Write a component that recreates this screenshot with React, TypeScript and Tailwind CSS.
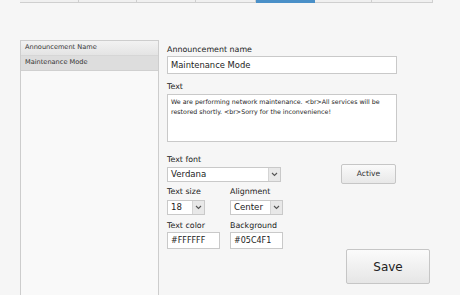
import React from "react";

const font = { fontFamily: '"DejaVu Sans", Verdana, sans-serif' };

function Chevron() {
  return (
    <svg width="7" height="5" viewBox="0 0 7 5">
      <path d="M1 1 L3.5 3.5 L6 1" fill="none" stroke="#555" strokeWidth="1.1" />
    </svg>
  );
}

function Select({ value, w, h = 15 }: { value: string; w: number; h?: number }) {
  return (
    <div
      className="flex items-stretch border border-[#c9c9c9] bg-white"
      style={{ width: w, height: h }}
    >
      <div className="flex-1 flex items-center pl-[3px] text-[8.6px] text-[#222]">{value}</div>
      <div className="w-[12px] flex items-center justify-center bg-[#e8e8e8] border-l border-[#d4d4d4]">
        <Chevron />
      </div>
    </div>
  );
}

export default function App() {
  const tabs = [59, 58, 59, 60, 59, 57, 61];
  return (
    <div className="w-[460px] h-[295px] bg-[#f6f6f6] overflow-hidden flex flex-col" style={font}>
      <div className="ml-[20px] w-[413px] h-[3px] flex shrink-0">
        {tabs.map((w, i) => (
          <div
            key={i}
            style={{ width: w }}
            className={
              i === 4
                ? "h-[3px] bg-[#4a90c8]"
                : "h-[3px] border-b border-r border-[#cfcfcf] bg-[#f0f0f0]"
            }
          />
        ))}
      </div>
      <div className="flex mt-[37px] flex-1">
        <div className="ml-[20px] w-[139px] border border-[#cdcdcd] border-b-0 bg-[#f9f9f9] flex flex-col">
          <div className="h-[15px] flex items-center pl-[4px] text-[6.6px] text-[#333] bg-gradient-to-b from-[#f2f2f2] to-[#e4e4e4] border-b border-[#d6d6d6]">
            Announcement Name
          </div>
          <div className="h-[15px] flex items-center pl-[4px] text-[6.6px] text-[#333] bg-[#dddddd] border-b border-[#d0d0d0]">
            Maintenance Mode
          </div>
        </div>
        <div className="ml-[8px] flex flex-col mt-[5px]">
          <div className="text-[7.9px] text-[#222] leading-[10px]">Announcement name</div>
          <div className="mt-[1px] w-[230px] h-[18px] border border-[#c9c9c9] bg-white flex items-center pl-[3px] text-[8.4px] text-[#222]">
            Maintenance Mode
          </div>
          <div className="mt-[8px] text-[7.9px] text-[#222] leading-[10px]">Text</div>
          <div className="mt-[2px] w-[230px] h-[48px] border border-[#c9c9c9] bg-white px-[3px] pt-[2px] text-[6.3px] leading-[10px] text-[#222]">
            We are performing network maintenance. &lt;br&gt;All services will be restored shortly. &lt;br&gt;Sorry for the inconvenience!
          </div>
          <div className="flex mt-[13px]">
            <div className="flex flex-col">
              <div className="text-[7.9px] text-[#222] leading-[10px]">Text font</div>
              <div className="mt-[2px]">
                <Select value="Verdana" w={114} />
              </div>
            </div>
            <div className="ml-[60px] mt-[9px]">
              <div className="w-[55px] h-[20px] border border-[#c6c6c6] rounded-[2px] bg-gradient-to-b from-[#fafafa] to-[#e8e8e8] flex items-center justify-center text-[7.6px] text-[#333]">
                Active
              </div>
            </div>
          </div>
          <div className="flex mt-[3px]">
            <div className="flex flex-col w-[63px]">
              <div className="text-[7.9px] text-[#222] leading-[10px]">Text size</div>
              <div className="mt-[3px]">
                <Select value="18" w={38} />
              </div>
            </div>
            <div className="flex flex-col">
              <div className="text-[7.9px] text-[#222] leading-[10px]">Alignment</div>
              <div className="mt-[3px]">
                <Select value="Center" w={53} />
              </div>
            </div>
          </div>
          <div className="flex">
            <div className="flex flex-col w-[63px] mt-[6px]">
              <div className="text-[7.9px] text-[#222] leading-[10px]">Text color</div>
              <div className="mt-[1px] w-[53px] h-[17px] border border-[#c9c9c9] bg-white flex items-center pl-[3px] text-[8px] text-[#222]">
                #FFFFFF
              </div>
            </div>
            <div className="flex flex-col mt-[6px]">
              <div className="text-[7.9px] text-[#222] leading-[10px]">Background</div>
              <div className="mt-[1px] w-[53px] h-[17px] border border-[#c9c9c9] bg-white flex items-center pl-[3px] text-[8px] text-[#222]">
                #05C4F1
              </div>
            </div>
            <div className="ml-[63px] mt-[34px]">
              <div className="w-[84px] h-[35px] border border-[#c6c6c6] rounded-[2px] bg-gradient-to-b from-[#fbfbfb] to-[#e6e6e6] flex items-center justify-center text-[12px] text-[#222]">
                Save
              </div>
            </div>
          </div>
        </div>
      </div>
    </div>
  );
}
